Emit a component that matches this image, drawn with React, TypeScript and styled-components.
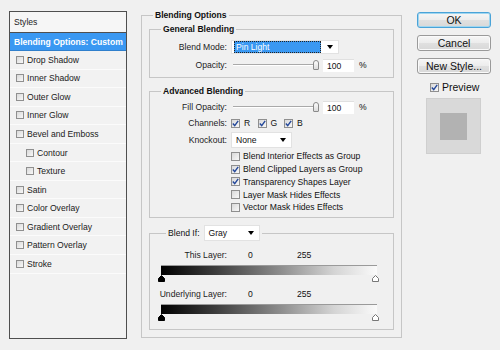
import React from "react";
import styled, { createGlobalStyle } from "styled-components";

const GlobalStyle = createGlobalStyle`
  *, *::before, *::after { box-sizing: border-box; }
  html, body { margin: 0; padding: 0; background: #f0f0f0; }
  body {
    font-family: "Liberation Sans", Arial, sans-serif;
    font-size: 8.6px;
    color: #111;
  }
`;

const Dialog = styled.div`
  display: flex;
  align-items: flex-start;
  width: 500px;
  height: 350px;
  background: #f0f0f0;
  overflow: hidden;
`;

/* ---------- left styles list ---------- */

const StylesPanel = styled.div`
  margin: 11px 0 0 9px;
  width: 118px;
  height: 328px;
  border: 1px solid #4f4f4f;
  background: #f2f2f2;
  display: flex;
  flex-direction: column;
`;

const PanelHeader = styled.div`
  height: 21px;
  border-bottom: 1px solid #4f4f4f;
  background: #f6f6f6;
  display: flex;
  align-items: center;
  padding-left: 4px;
  color: #222;
`;

const StyleRow = styled.div<{ $selected?: boolean; $indent?: boolean }>`
  height: ${(p) => (p.$selected ? "18px" : "18.55px")};
  display: flex;
  align-items: center;
  gap: 3px;
  padding-left: ${(p) => (p.$selected ? "4px" : p.$indent ? "16px" : "6px")};
  background: ${(p) => (p.$selected ? "#3a98f2" : "transparent")};
  color: ${(p) => (p.$selected ? "#fff" : "#1a1a1a")};
  font-weight: ${(p) => (p.$selected ? "bold" : "normal")};
  border-bottom: 1px solid ${(p) => (p.$selected ? "#2f7fcc" : "#fbfbfb")};
`;

/* ---------- shared controls ---------- */

const Box = styled.span<{ $size?: number }>`
  flex: none;
  width: ${(p) => p.$size ?? 9}px;
  height: ${(p) => p.$size ?? 9}px;
  border: 1px solid #8f8f8f;
  background: linear-gradient(135deg, #d9d9d9, #f8f8f8);
  display: inline-flex;
  align-items: center;
  justify-content: center;
`;

const Check: React.FC<{ checked?: boolean; size?: number }> = ({ checked, size }) => (
  <Box $size={size}>
    {checked && (
      <svg width="7" height="7" viewBox="0 0 7 7">
        <path d="M0.8 3.6 L2.7 5.6 L6.2 0.8" fill="none" stroke="#24489a" strokeWidth="1.4" />
      </svg>
    )}
  </Box>
);

const Arrow = styled.span`
  width: 0;
  height: 0;
  border-left: 3.5px solid transparent;
  border-right: 3.5px solid transparent;
  border-top: 4px solid #000;
`;

const Select = styled.div<{ $w: number; $h?: number }>`
  width: ${(p) => p.$w}px;
  height: ${(p) => p.$h ?? 16}px;
  background: #fff;
  border: 1px solid #e2e2e2;
  display: flex;
  align-items: center;
  justify-content: space-between;
  padding: 0 5px 0 2px;
  font-weight: normal;
  color: #111;
`;

const SelectValue = styled.span<{ $active?: boolean }>`
  flex: 1;
  height: 100%;
  display: flex;
  align-items: center;
  padding-left: 2px;
  margin-right: 6px;
  background: ${(p) => (p.$active ? "#3a98f2" : "transparent")};
  color: ${(p) => (p.$active ? "#fff" : "#111")};
  outline: ${(p) => (p.$active ? "1px dotted #222" : "none")};
  outline-offset: -1px;
`;

const Slider = styled.div`
  width: 86px;
  height: 10px;
  margin-left: 2px;
  display: flex;
  align-items: center;
  justify-content: flex-end;
  background: linear-gradient(#f0f0f0 4px, #a9a9a9 4px, #a9a9a9 5px, #fff 5px, #fff 6px, #f0f0f0 6px);
`;

const Thumb = styled.span`
  width: 6px;
  height: 10px;
  border: 1px solid #8a8a8a;
  border-radius: 3px 3px 1px 1px;
  background: linear-gradient(#fdfdfd, #dcdcdc);
`;

const NumberBox = styled.div`
  width: 31px;
  height: 13px;
  margin-left: 4px;
  background: #fff;
  border-top: 1px solid #e0e0e0;
  display: flex;
  align-items: center;
  padding-left: 4px;
`;

const Unit = styled.span`
  margin-left: 5px;
`;

/* ---------- group boxes ---------- */

const MainColumn = styled.div`
  margin-left: 14px;
  width: 261px;
  flex: none;
`;

const Group = styled.fieldset<{ $h: number; $mt?: number; $pad?: string }>`
  margin: ${(p) => p.$mt ?? 0}px 0 0;
  padding: ${(p) => p.$pad ?? "0"};
  height: ${(p) => p.$h}px;
  border: 1px solid #c6c6c6;
  min-width: 0;
  display: block;
`;

const Legend = styled.legend<{ $ml: number }>`
  margin-left: ${(p) => p.$ml}px;
  padding: 0 2px;
  font-weight: bold;
  line-height: 10px;
  color: #111;
`;

const LegendInner = styled.span`
  display: flex;
  align-items: center;
  gap: 4px;
  font-weight: normal;
`;

const Stack = styled.div<{ $pt: number; $gap?: number }>`
  display: flex;
  flex-direction: column;
  padding-top: ${(p) => p.$pt}px;
  gap: ${(p) => p.$gap ?? 0}px;
`;

const Row = styled.div<{ $h?: number; $mt?: number }>`
  display: flex;
  align-items: center;
  height: ${(p) => p.$h ?? 14}px;
  margin-top: ${(p) => p.$mt ?? 0}px;
`;

const Label = styled.span`
  width: 77px;
  text-align: right;
  margin-right: 4px;
  color: #1c1c1c;
`;

const Channel = styled.span`
  width: 26.5px;
  display: flex;
  align-items: center;
  gap: 4px;
`;

const OptionRow = styled.div`
  height: 12.75px;
  display: flex;
  align-items: center;
  gap: 3px;
  padding-left: 81px;
`;

const Value = styled.span<{ $first?: boolean }>`
  width: 49px;
  margin-left: ${(p) => (p.$first ? "17px" : "0")};
`;

const Gradient = styled.div`
  margin: 4px 0 0 11px;
  width: 216px;
  height: 10px;
  border-top: 1px solid #9a9a9a;
  background: linear-gradient(to right, #000 0%, #3c3c3c 25%, #8c8c8c 55%, #d4d4d4 80%, #fafafa 100%);
`;

const MarkerRow = styled.div`
  margin-left: 8px;
  width: 221px;
  height: 7px;
  display: flex;
  justify-content: space-between;
  align-items: flex-end;
`;

const Marker: React.FC<{ dark?: boolean }> = ({ dark }) => (
  <svg width="7" height="7" viewBox="0 0 7 7">
    <polygon
      points="3.5,0.5 6.5,3.5 6.5,6.5 0.5,6.5 0.5,3.5"
      fill={dark ? "#000" : "#fff"}
      stroke={dark ? "#000" : "#777"}
      strokeWidth="1"
    />
  </svg>
);

/* ---------- right column ---------- */

const SideColumn = styled.div`
  margin: 12px 0 0 15px;
  width: 74px;
  flex: none;
  display: flex;
  flex-direction: column;
  align-items: flex-start;
  gap: 7px;
`;

const Button = styled.button<{ $default?: boolean }>`
  width: 74px;
  height: 16px;
  padding: 0;
  font-family: inherit;
  font-size: 10.5px;
  color: #111;
  border-radius: 3px;
  border: 1px solid ${(p) => (p.$default ? "#4aa3d8" : "#9a9a9a")};
  box-shadow: ${(p) => (p.$default ? "inset 0 0 0 1px #9fd6f0" : "inset 0 0 0 1px #fafafa")};
  background: linear-gradient(#f6f6f6, #ececec 50%, #e0e0e0 51%, #d8d8d8);
`;

const PreviewToggle = styled.label`
  display: flex;
  align-items: center;
  gap: 3px;
  margin: 1px 0 0 13px;
  height: 10px;
  font-size: 10.5px;
`;

const PreviewBox = styled.div`
  margin: -1px 0 0 9px;
  width: 55px;
  height: 56px;
  background: #d9d9d9;
  border: 1px solid #cfcfcf;
  display: flex;
  align-items: center;
  justify-content: center;
`;

const Swatch = styled.div`
  width: 27px;
  height: 27px;
  background: #b2b2b2;
`;

const styleItems: { name: string; indent?: boolean }[] = [
  { name: "Drop Shadow" },
  { name: "Inner Shadow" },
  { name: "Outer Glow" },
  { name: "Inner Glow" },
  { name: "Bevel and Emboss" },
  { name: "Contour", indent: true },
  { name: "Texture", indent: true },
  { name: "Satin" },
  { name: "Color Overlay" },
  { name: "Gradient Overlay" },
  { name: "Pattern Overlay" },
  { name: "Stroke" },
];

const advancedOptions: [string, boolean][] = [
  ["Blend Interior Effects as Group", false],
  ["Blend Clipped Layers as Group", true],
  ["Transparency Shapes Layer", true],
  ["Layer Mask Hides Effects", false],
  ["Vector Mask Hides Effects", false],
];

const LayerRange: React.FC<{ label: string; first?: boolean }> = ({ label, first }) => (
  <>
    <Row $h={12} $mt={first ? 0 : 6}>
      <Label>{label}</Label>
      <Value $first>0</Value>
      <Value>255</Value>
    </Row>
    <Gradient />
    <MarkerRow>
      <Marker dark />
      <Marker />
    </MarkerRow>
  </>
);

const App: React.FC = () => {
  return (
    <Dialog>
      <GlobalStyle />
      <StylesPanel>
        <PanelHeader>Styles</PanelHeader>
        <StyleRow $selected>Blending Options: Custom</StyleRow>
        {styleItems.map((item) => (
          <StyleRow key={item.name} $indent={item.indent}>
            <Check size={8} />
            {item.name}
          </StyleRow>
        ))}
      </StylesPanel>

      <MainColumn>
        <Group $h={328} $mt={10} $pad="4px 7px 0">
          <Legend $ml={4}>Blending Options</Legend>

          <Group $h={54}>
            <Legend $ml={11}>General Blending</Legend>
            <Stack $pt={6} $gap={4}>
              <Row>
                <Label>Blend Mode:</Label>
                <Select $w={108} $h={14}>
                  <SelectValue $active>Pin Light</SelectValue>
                  <Arrow />
                </Select>
              </Row>
              <Row>
                <Label>Opacity:</Label>
                <Slider>
                  <Thumb />
                </Slider>
                <NumberBox>100</NumberBox>
                <Unit>%</Unit>
              </Row>
            </Stack>
          </Group>

          <Group $h={132} $mt={8}>
            <Legend $ml={11}>Advanced Blending</Legend>
            <Stack $pt={4} $gap={2}>
              <Row>
                <Label>Fill Opacity:</Label>
                <Slider>
                  <Thumb />
                </Slider>
                <NumberBox>100</NumberBox>
                <Unit>%</Unit>
              </Row>
              <Row>
                <Label>Channels:</Label>
                {["R", "G", "B"].map((c) => (
                  <Channel key={c}>
                    <Check checked />
                    {c}
                  </Channel>
                ))}
              </Row>
              <Row $h={16}>
                <Label>Knockout:</Label>
                <Select $w={61}>
                  <SelectValue>None</SelectValue>
                  <Arrow />
                </Select>
              </Row>
              <div>
                {advancedOptions.map(([text, on]) => (
                  <OptionRow key={text}>
                    <Check checked={on} />
                    {text}
                  </OptionRow>
                ))}
              </div>
            </Stack>
          </Group>

          <Group $h={105} $mt={7}>
            <Legend $ml={16}>
              <LegendInner>
                Blend If:
                <Select $w={56}>
                  <SelectValue>Gray</SelectValue>
                  <Arrow />
                </Select>
              </LegendInner>
            </Legend>
            <Stack $pt={8}>
              <LayerRange label="This Layer:" first />
              <LayerRange label="Underlying Layer:" />
            </Stack>
          </Group>
        </Group>
      </MainColumn>

      <SideColumn>
        <Button $default>OK</Button>
        <Button>Cancel</Button>
        <Button>New Style...</Button>
        <PreviewToggle>
          <Check checked />
          Preview
        </PreviewToggle>
        <PreviewBox>
          <Swatch />
        </PreviewBox>
      </SideColumn>
    </Dialog>
  );
};

export default App;
